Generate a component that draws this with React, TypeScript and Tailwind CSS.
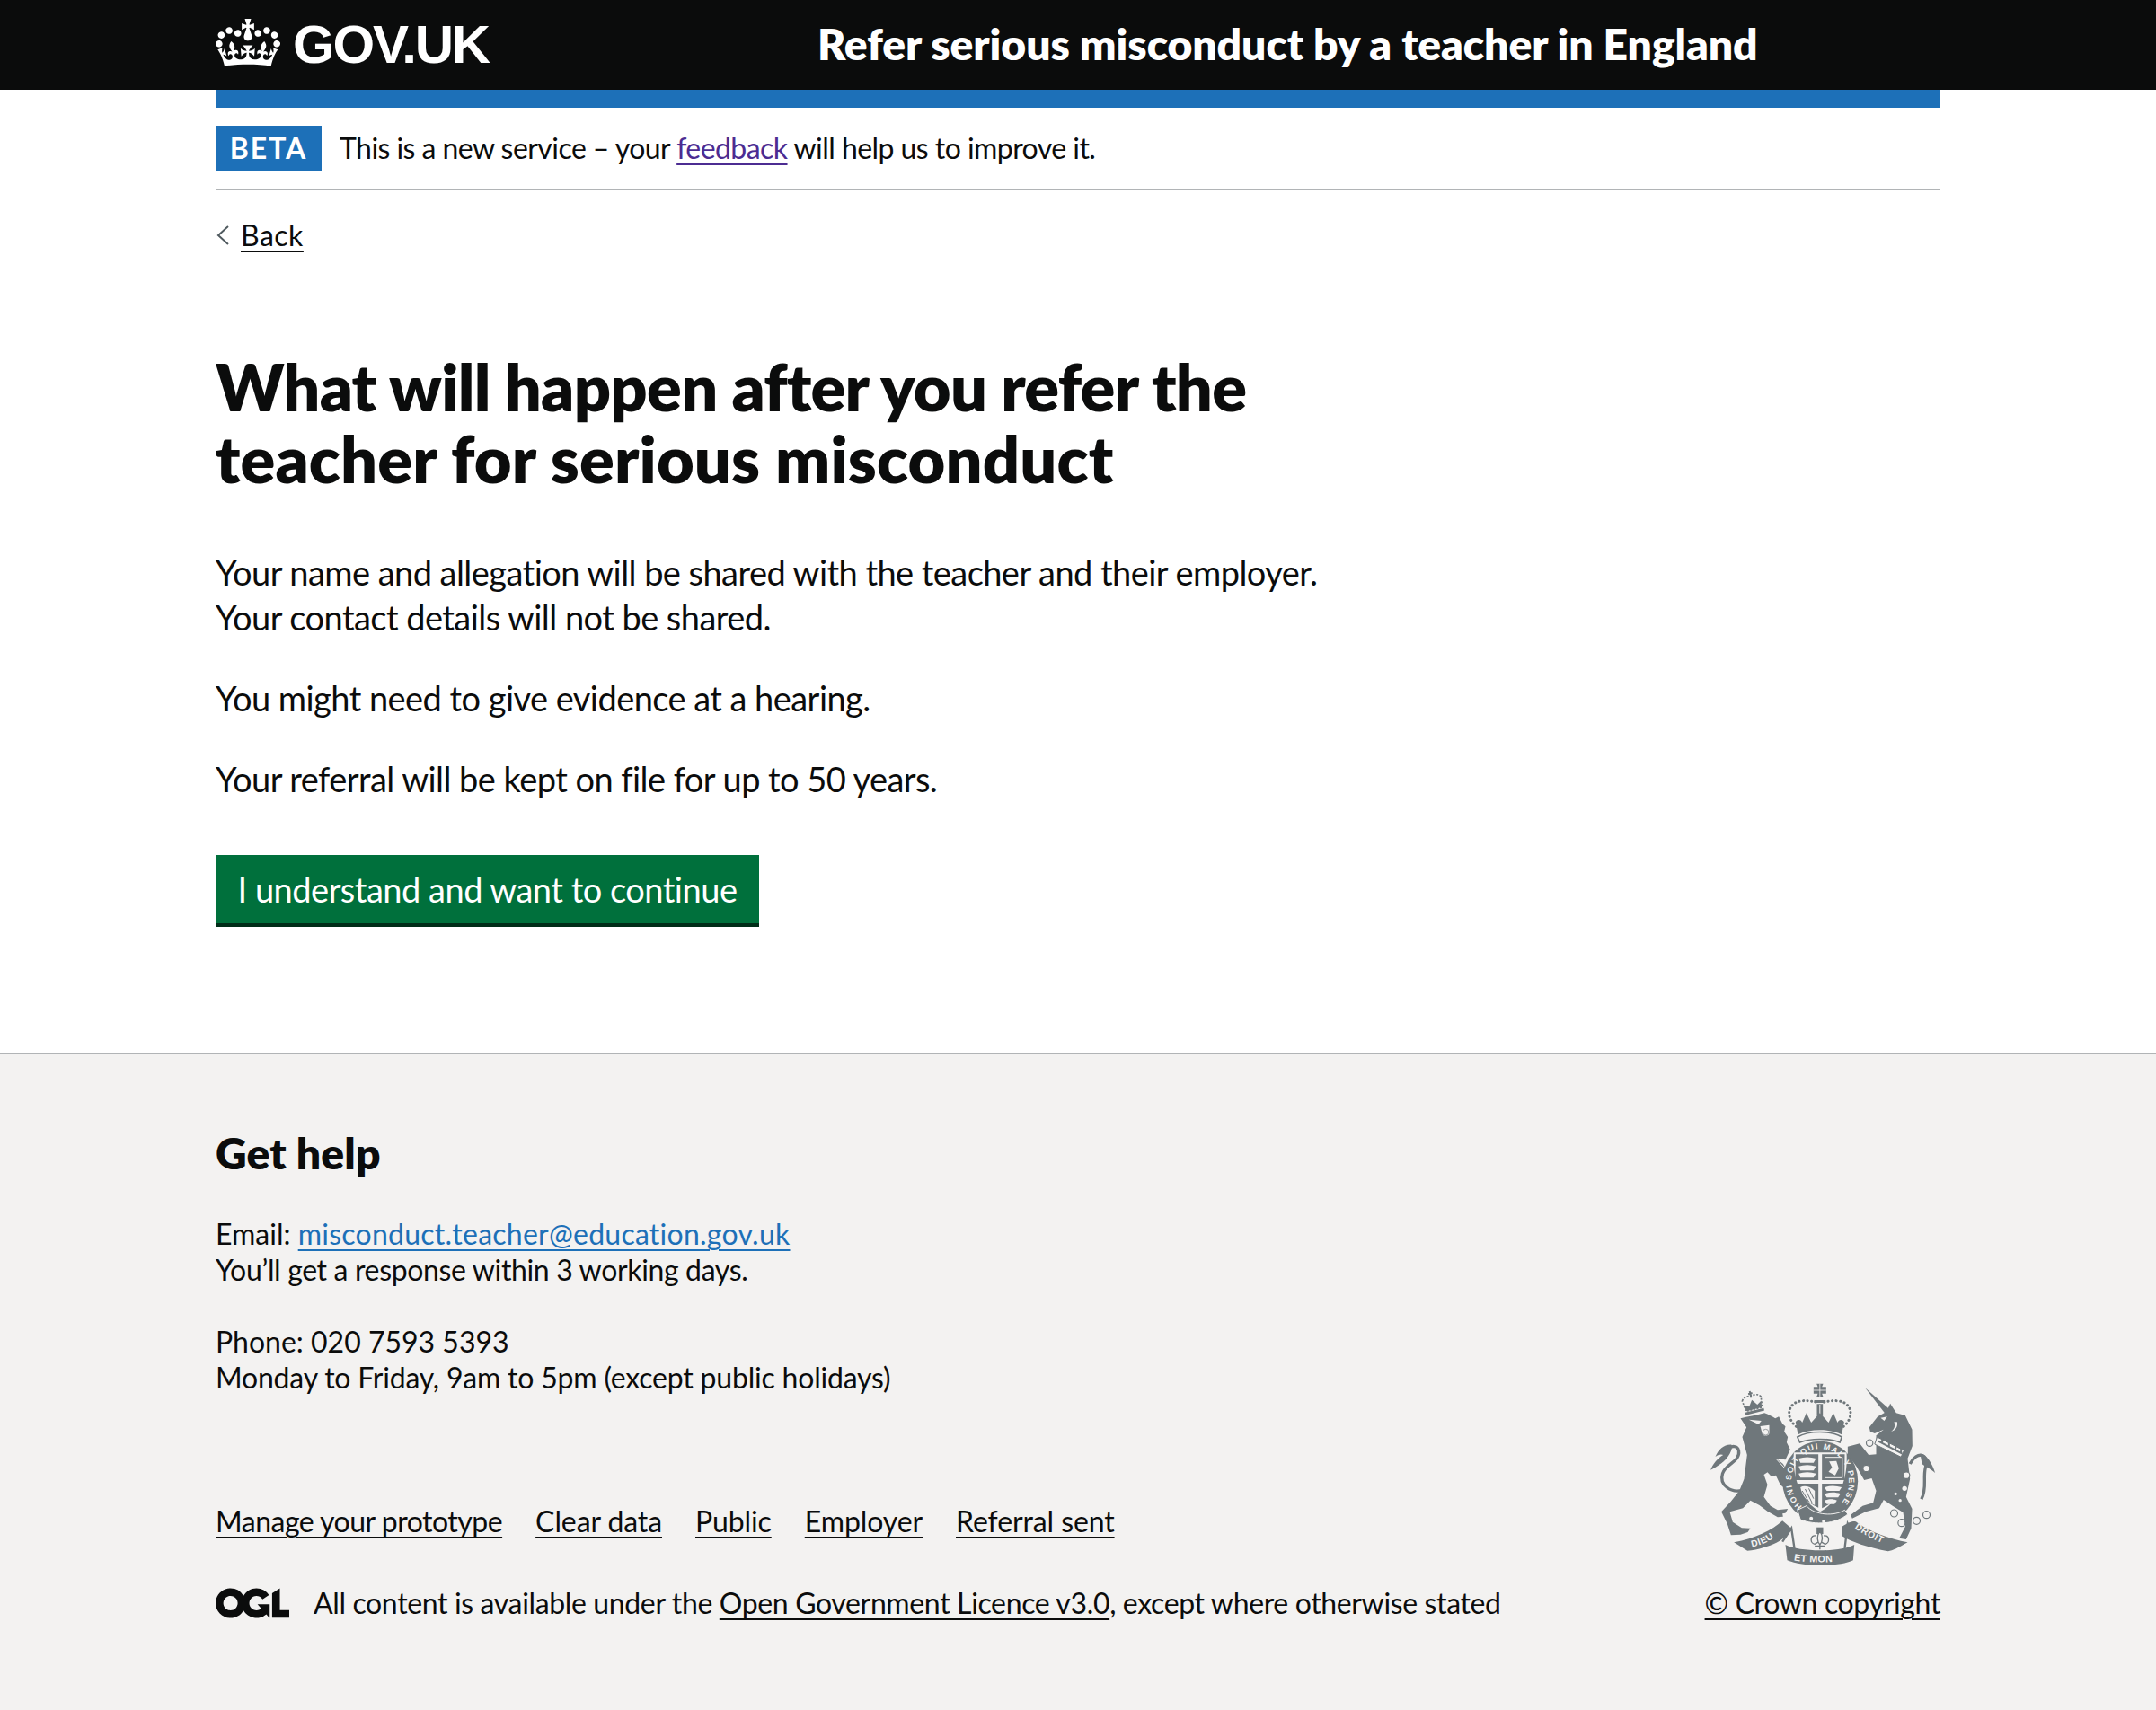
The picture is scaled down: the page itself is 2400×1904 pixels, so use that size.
function Crown() {
  return (
    <svg viewBox="0 0 132 97" className="w-[72px] h-[53px] fill-white shrink-0">
      <path d="M25 30.2c3.5 1.5 7.7-.2 9.1-3.7 1.5-3.6-.2-7.8-3.9-9.2-3.6-1.4-7.6.3-9.1 3.9-1.4 3.5.3 7.5 3.9 9zM9 39.5c3.6 1.5 7.8-.2 9.2-3.7 1.5-3.6-.2-7.8-3.9-9.1-3.6-1.5-7.6.2-9.1 3.8-1.4 3.5.3 7.5 3.8 9zM4.4 57.2c3.5 1.5 7.7-.2 9.1-3.8 1.5-3.6-.2-7.7-3.9-9.1-3.5-1.5-7.6.3-9.1 3.8-1.4 3.5.3 7.6 3.9 9.1zm38.3-21.4c3.5 1.5 7.7-.2 9.1-3.8 1.5-3.6-.2-7.7-3.9-9.1-3.6-1.5-7.6.3-9.1 3.8-1.3 3.6.4 7.7 3.9 9.1zm64.4-5.6c-3.6 1.5-7.8-.2-9.1-3.7-1.5-3.6.2-7.8 3.8-9.2 3.6-1.4 7.7.3 9.2 3.9 1.3 3.5-.4 7.5-3.9 9zm15.9 9.3c-3.6 1.5-7.7-.2-9.1-3.7-1.5-3.6.2-7.8 3.7-9.1 3.6-1.5 7.7.2 9.2 3.8 1.5 3.5-.3 7.5-3.8 9zm4.7 17.7c-3.6 1.5-7.8-.2-9.2-3.8-1.5-3.6.2-7.7 3.9-9.1 3.6-1.5 7.7.3 9.2 3.8 1.3 3.5-.4 7.6-3.9 9.1zM89.3 35.8c-3.6 1.5-7.8-.2-9.2-3.8-1.4-3.6.2-7.7 3.9-9.1 3.6-1.5 7.7.3 9.2 3.8 1.4 3.6-.3 7.7-3.9 9.1zM69.7 17.7l8.9 4.7V9.3l-8.9 2.8c-.2-.3-.5-.6-.9-.9L72.4 0H59.6l3.5 11.2c-.3.3-.6.5-.9.9l-8.8-2.8v13.1l8.8-4.7c.3.3.6.7.9.9l-5 15.4v.1c-.2.8-.4 1.6-.4 2.4 0 4.1 3.1 7.5 7 8.1h.2c.3 0 .7.1 1 .1.4 0 .7 0 1-.1h.2c4-.6 7.1-4.1 7.1-8.1 0-.8-.1-1.7-.4-2.4V34l-5.1-15.4c.4-.2.7-.6 1-.9zM66 92.8c16.9 0 32.8 1.1 47.1 3.2 4-16.9 8.9-26.7 14-33.5l-9.6-3.4c1 4.9 1.1 7.2 0 10.2-1.5-1.4-3-4.3-4.2-8.7L108.6 76c2.8-2 5-3.2 7.5-3.3-4.4 9.4-10 11.9-13.6 11.2-4.3-.8-6.3-4.6-5.6-7.9 1-4.7 5.7-5.9 8-.5 4.3-8.7-3-11.4-7.6-8.8 7.1-7.2 7.9-13.5 2.1-21.1-8 6.1-8.1 12.3-4.5 20.8-4.7-5.4-12.1-2.5-9.5 6.2 3.4-5.2 7.9-2 7.2 3.1-.6 4.3-6.4 7.8-13.5 7.2-10.3-.9-10.9-8-11.2-13.8 2.5-.5 7.1 1.8 11 7.3L80.2 60c-4.1 4.4-8 5.3-12.3 5.4 1.4-4.4 8-11.6 8-11.6H55.5s6.4 7.2 7.9 11.6c-4.2-.1-8-1-12.3-5.4l1.4 16.4c3.9-5.5 8.5-7.7 10.9-7.3-.3 5.8-.9 12.8-11.1 13.8-7.2.6-12.9-2.9-13.5-7.2-.7-5 3.8-8.3 7.1-3.1 2.7-8.7-4.6-11.6-9.4-6.2 3.7-8.5 3.6-14.7-4.6-20.8-5.8 7.6-5 13.9 2.2 21.1-4.7-2.6-11.9.1-7.7 8.8 2.3-5.5 7.1-4.2 8.1.5.7 3.3-1.3 7.1-5.7 7.9-3.5.7-9-1.8-13.5-11.2 2.5.1 4.7 1.3 7.5 3.3l-4.7-15.4c-1.2 4.4-2.7 7.2-4.3 8.7-1.1-3-.9-5.3 0-10.2l-9.5 3.4c5 6.9 9.9 16.7 14 33.5 14.8-2.1 30.8-3.2 47.7-3.2z" />
    </svg>
  );
}

function Ogl() {
  return (
    <svg viewBox="0 0 483.2 195.7" className="w-[82px] h-[34px] fill-[#0b0c0c] shrink-0">
      <path d="M421.5 142.8V.1l-50.7 32.3v161.1h112.4v-50.7zm-122.3-9.6A47.12 47.12 0 0 1 221 97.8c0-26 21.1-47.1 47.1-47.1 16.7 0 31.4 8.7 39.7 21.8l42.7-27.2A97.63 97.63 0 0 0 268.1 0c-36.5 0-68.3 20.1-85.1 49.7A98 98 0 0 0 97.8 0C43.9 0 0 43.9 0 97.8s43.9 97.8 97.8 97.8c36.5 0 68.3-20.1 85.1-49.7a97.76 97.76 0 0 0 149.6 25.4l19.4 22.2h3v-87.8h-80l24.3 27.5zM97.8 145c-26 0-47.1-21.1-47.1-47.1s21.1-47.1 47.1-47.1 47.2 21 47.2 47S123.8 145 97.8 145" />
    </svg>
  );
}

function Crest() {
  const g = "#6f777b";
  const bg = "#f3f2f1";
  const T = "Liberation Sans, sans-serif";
  return (
    <svg viewBox="60 60 770 615" className="w-[257px] h-[205px] block mr-[3px]">
      {/* lion tail */}
      <path d="M178 418 C140 428 100 400 112 362 C122 330 172 322 166 286 C162 268 142 268 130 280" fill="none" stroke={g} strokeWidth="10" />
      <path d="M142 266 C118 264 98 282 88 306 C100 298 108 297 114 300 C95 312 80 330 72 350 C95 338 122 322 136 296 C140 288 146 276 142 266 Z" fill={g} />
      {/* lion */}
      <path d="M172 178 C195 172 225 168 252 160 C265 165 280 172 288 178 L300 172 L312 196 L322 205 L318 222 L330 240 L326 258 L338 282 L322 316 L292 312 L314 330 L332 360 L346 392 L340 416 L320 412 L305 400 L290 368 L275 372 L262 358 L250 366 L262 400 L250 440 L272 470 L296 484 L330 480 L322 494 L312 496 L314 506 L296 508 L262 488 L235 468 L205 452 L180 478 L136 490 L146 524 L176 544 L205 545 L196 558 L172 566 L140 568 L128 530 L108 490 L140 455 L168 420 L184 380 L194 300 L178 240 L192 208 Z" fill={g} />
      <path d="M200 182 L242 186 L232 198 Z M238 204 L268 200 L268 228 C265 238 250 238 245 230 Z" fill={bg} />
      <circle cx="256" cy="224" r="10" fill={bg} stroke={g} strokeWidth="2" />
      <path d="M290 312 L336 362" stroke={bg} strokeWidth="3" />
      {/* lion crown */}
      <g transform="rotate(-14 212 125)">
        <path d="M180 112 C190 96 204 104 212 100 C220 104 234 96 244 112 L240 148 H184 Z" fill="none" stroke={g} strokeWidth="5" strokeDasharray="6 5" />
        <path d="M186 148 L182 126 L198 136 L212 116 L226 136 L242 126 L238 148 Z" fill={g} />
        <path d="M180 156 L244 156" stroke={g} strokeWidth="9" />
        <path d="M205 94 h14 M212 86 v22" stroke={g} strokeWidth="6" />
      </g>
      {/* crown */}
      <path d="M426 62 h22 l-4 11 h14 v22 h-14 l4 11 h-22 l4 -11 h-14 v-22 h14 Z" fill={g} />
      <path d="M437 62 v44 M416 84 h42" stroke={bg} strokeWidth="2.5" />
      <path d="M418 117 h38 v9 h-38 Z M427 130 h20 v40 h-20 Z" fill={g} />
      <path d="M437 132 v36" stroke={bg} strokeWidth="3" />
      <path d="M358 205 C322 175 328 128 372 120 C398 116 414 122 426 124 M516 205 C552 175 546 128 502 120 C476 116 460 122 448 124" fill="none" stroke={g} strokeWidth="9" strokeDasharray="0.5 13" strokeLinecap="round" />
      <path d="M356 190 C362 180 374 180 378 192 L392 160 L408 192 L437 160 L466 192 L482 160 L496 192 C500 180 512 180 518 190 L510 232 C470 212 404 212 364 232 Z" fill={g} />
      <path d="M362 240 C400 218 474 218 510 240 L504 258 C470 244 404 244 370 258 Z" fill={bg} stroke={g} strokeWidth="5" />
      {/* garter */}
      <ellipse cx="438" cy="388" rx="126" ry="134" fill={g} />
      {/* shield */}
      <path d="M350 292 H526 C531 372 508 450 438 490 C368 450 345 372 350 292 Z" fill={bg} />
      <path d="M356 298 H432 V384 H355 Z M444 298 H520 L519 384 H444 Z M359 396 H432 V476 C400 462 370 440 359 396 Z M444 396 H517 C506 440 476 462 444 478 Z" fill={g} />
      <path d="M366 312 C385 306 405 306 424 312 L416 326 H372 Z M366 338 C385 332 405 332 424 338 L416 352 H372 Z M366 362 C385 356 405 356 424 362 L416 376 H372 Z M452 408 C470 402 490 402 510 408 L502 420 H460 Z M452 430 C470 424 490 424 506 430 L498 442 H460 Z M452 452 C470 446 480 446 494 452 L486 464 H460 Z" fill={bg} />
      <path d="M454 308 H512 V376 H454 Z" fill="none" stroke={bg} strokeWidth="3" />
      <path d="M468 322 L492 320 L500 345 L488 368 L466 356 L478 342 Z" fill={bg} />
      <path d="M372 408 C378 440 398 458 420 468 L420 420 C405 405 385 400 372 408 Z" fill={bg} />
      <path d="M388 414 L412 462 M400 412 L416 446 M378 420 L400 456" stroke={g} strokeWidth="3" />
      <path id="garter" d="M378 472 A96 108 0 1 1 498 472" fill="none" />
      <text fontFamily={T} fontSize="27" fontWeight="700" fill={bg}>
        <textPath href="#garter" textLength="490" lengthAdjust="spacing">HONI SOIT QUI MAL Y PENSE</textPath>
      </text>
      {/* buckle */}
      <path d="M362 484 L392 470 C420 502 484 506 520 484 L530 498 C490 532 420 535 372 516 Z" fill={g} stroke={bg} strokeWidth="3" />
      <circle cx="408" cy="512" r="6" fill={bg} /><circle cx="450" cy="522" r="6" fill={bg} />
      {/* unicorn */}
      <path d="M588 76 L670 148 L655 162 Z" fill={g} />
      <path d="M738 330 C762 284 802 296 790 340 C780 378 796 410 776 448" fill="none" stroke={g} strokeWidth="10" />
      <path d="M772 296 C795 296 815 335 822 360 C805 345 790 340 778 330 Z" fill={g} />
      <path d="M602 208 L630 172 L660 155 L672 128 L692 160 L722 168 L745 215 L746 270 L730 312 L738 380 L725 440 L745 480 L742 545 L725 582 L702 578 L722 540 L715 492 L680 470 L650 450 L635 478 L590 490 L545 512 L540 500 L580 470 L615 460 L625 420 L610 378 L585 384 L560 340 L530 300 L530 272 L570 262 L600 300 L625 298 L625 235 L650 215 L620 228 L605 222 Z" fill={g} />
      <path d="M628 240 L718 285 L708 307 L620 264 Z" fill={bg} stroke={g} strokeWidth="3" />
      <path d="M645 240 v20 M668 252 v20 M690 264 v20 M708 272 v20 M632 254 L712 296" stroke={g} strokeWidth="6" />
      <path d="M640 176 L662 172 L652 186 Z M685 190 C690 205 685 215 675 222 C690 218 698 205 695 190 Z" fill={bg} />
      {[[603, 260], [592, 345], [726, 368], [685, 495], [710, 527], [760, 520], [793, 500]].map(([x, y]) => (
        <circle key={x} cx={x} cy={y} r={y > 490 ? 12 : 11} fill={bg} stroke={g} strokeWidth="3.5" />
      ))}
      <circle cx="720" cy="412" r="8" fill={bg} /><circle cx="690" cy="430" r="5" fill={bg} /><circle cx="705" cy="452" r="5" fill={bg} />
      {/* ribbons */}
      <path d="M150 592 C220 580 280 550 312 520 L342 545 C330 580 270 612 195 620 Z" fill={g} />
      <path d="M312 590 L342 545 L352 612 M562 590 L530 530 L520 612" fill="none" stroke={g} strokeWidth="7" />
      <path d="M322 600 C370 625 505 625 552 600 L548 652 C500 675 380 675 328 652 Z" fill={g} />
      <path d="M510 540 C540 520 555 520 560 525 C610 560 670 580 730 592 C700 610 680 620 665 622 C600 610 540 590 510 570 Z" fill={g} />
      <path id="dieu" d="M210 608 C250 600 285 580 315 550" fill="none" />
      <text fontFamily={T} fontSize="31" fontWeight="700" fill={bg} letterSpacing="2"><textPath href="#dieu">DIEU</textPath></text>
      <path id="etmon" d="M350 652 C400 661 480 661 528 650" fill="none" />
      <text fontFamily={T} fontSize="32" fontWeight="700" fill={bg} letterSpacing="1"><textPath href="#etmon">ET MON</textPath></text>
      <path id="droit" d="M552 545 C590 570 630 590 672 606" fill="none" />
      <text fontFamily={T} fontSize="31" fontWeight="700" fill={bg} letterSpacing="2"><textPath href="#droit">DROIT</textPath></text>
      {/* fleur */}
      <path d="M426 542 h22 v22 h-22 Z" fill={g} />
      <path d="M437 555 C425 570 428 590 437 600 C446 590 449 570 437 555 Z M424 570 C405 565 402 595 420 598 L430 592 M450 570 C469 565 472 595 454 598 L444 592 M420 604 h34 M437 600 v16" fill={bg} stroke={g} strokeWidth="4" />
    </svg>
  );
}

export default function App() {
  const link = "underline decoration-2 underline-offset-[5px]";
  return (
    <div className="font-['Lato',sans-serif] [font-variant-ligatures:none] min-h-[1904px] flex flex-col bg-white text-[#0b0c0c]">
      <header className="bg-[#0b0c0c] h-[100px] shrink-0">
        <div className="mx-[240px] h-full flex items-start">
          <div className="w-[670px] shrink-0 flex items-start gap-[14px] pt-[21px]">
            <Crown />
            <span className="font-['Liberation_Sans',sans-serif] font-bold text-[60px] leading-[60px] text-white tracking-[-2.2px] mt-[-1px]">GOV.UK</span>
          </div>
          <div className="text-white font-extrabold text-[48px] leading-[98px] whitespace-nowrap tracking-[-0.07px]">Refer serious misconduct by a teacher in England</div>
        </div>
      </header>
      <div className="mx-[240px] flex flex-col">
        <div className="h-[20px] bg-[#1d70b8]" />
        <div className="flex items-center gap-[20px] py-[20px] border-b-2 border-[#b1b4b6]">
          <strong className="w-[118px] h-[50px] bg-[#1d70b8] text-white flex items-center justify-center font-bold text-[32px] tracking-[2px] leading-none">BETA</strong>
          <p className="text-[32px] leading-[40px] tracking-[-0.55px]">
            This is a new service – your <a className={`text-[#4c2c92] ${link}`}>feedback</a> will help us to improve it.
          </p>
        </div>
        <div className="mt-[30px] flex items-center gap-[12px] h-[40px]">
          <svg viewBox="0 0 16 24" className="w-[16px] h-[24px] fill-none stroke-[#505a5f] stroke-2"><path d="M14 2 L3 12 L14 22" /></svg>
          <a className={`text-[32px] leading-[40px] tracking-[0.5px] ${link}`}>Back</a>
        </div>
        <main className="w-[1260px] mt-[108px] pb-[140px]">
          <h1 className="font-extrabold text-[72px] leading-[80px] mb-[62px]">
            <span className="tracking-[-0.7px]">What will happen after you refer the</span>{" "}
            <span className="tracking-[0.15px]">teacher for serious misconduct</span>
          </h1>
          <div className="flex flex-col gap-[40px] text-[38px] leading-[50px] tracking-[-0.55px]">
            <p>Your name and allegation will be shared with the teacher and their employer. Your contact details will not be shared.</p>
            <p>You might need to give evidence at a hearing.</p>
            <p>Your referral will be kept on file for up to 50 years.</p>
          </div>
          <button className="mt-[60px] w-[605px] h-[80px] pb-[4px] bg-[#00703c] shadow-[inset_0_-4px_0_#002d18] text-white text-[38px] leading-[50px] tracking-[-0.5px] whitespace-nowrap">I understand and want to continue</button>
        </main>
      </div>
      <footer className="flex-1 bg-[#f3f2f1] border-t-2 border-[#b1b4b6] px-[240px] pt-[80px] text-[32px] leading-[40px]">
        <div className="flex justify-between items-end">
          <div>
            <h2 className="font-extrabold text-[48px] leading-[60px] mb-[40px] tracking-[0.1px]">Get help</h2>
            <p>Email: <a className={`text-[#1d70b8] tracking-[0.25px] ${link}`}>misconduct.teacher@education.gov.uk</a></p>
            <p className="tracking-[-0.35px]">You’ll get a response within 3 working days.</p>
            <p className="mt-[40px]">Phone: 020 7593 5393</p>
            <p className="tracking-[-0.2px]">Monday to Friday, 9am to 5pm (except public holidays)</p>
            <ul className="flex gap-[37px] mt-[120px] tracking-[-0.1px]">
              <li><a className={`tracking-[-0.5px] ${link}`}>Manage your prototype</a></li>
              <li><a className={link}>Clear data</a></li>
              <li><a className={link}>Public</a></li>
              <li><a className={link}>Employer</a></li>
              <li><a className={link}>Referral sent</a></li>
            </ul>
            <div className="flex items-center gap-[27px] mt-[51px]">
              <Ogl />
              <p className="tracking-[-0.36px]">All content is available under the <a className={link}>Open Government Licence v3.0</a>, except where otherwise stated</p>
            </div>
          </div>
          <div className="flex flex-col items-end">
            <Crest />
            <a className={`mt-[20px] tracking-[-0.35px] ${link}`}>© Crown copyright</a>
          </div>
        </div>
      </footer>
    </div>
  );
}
